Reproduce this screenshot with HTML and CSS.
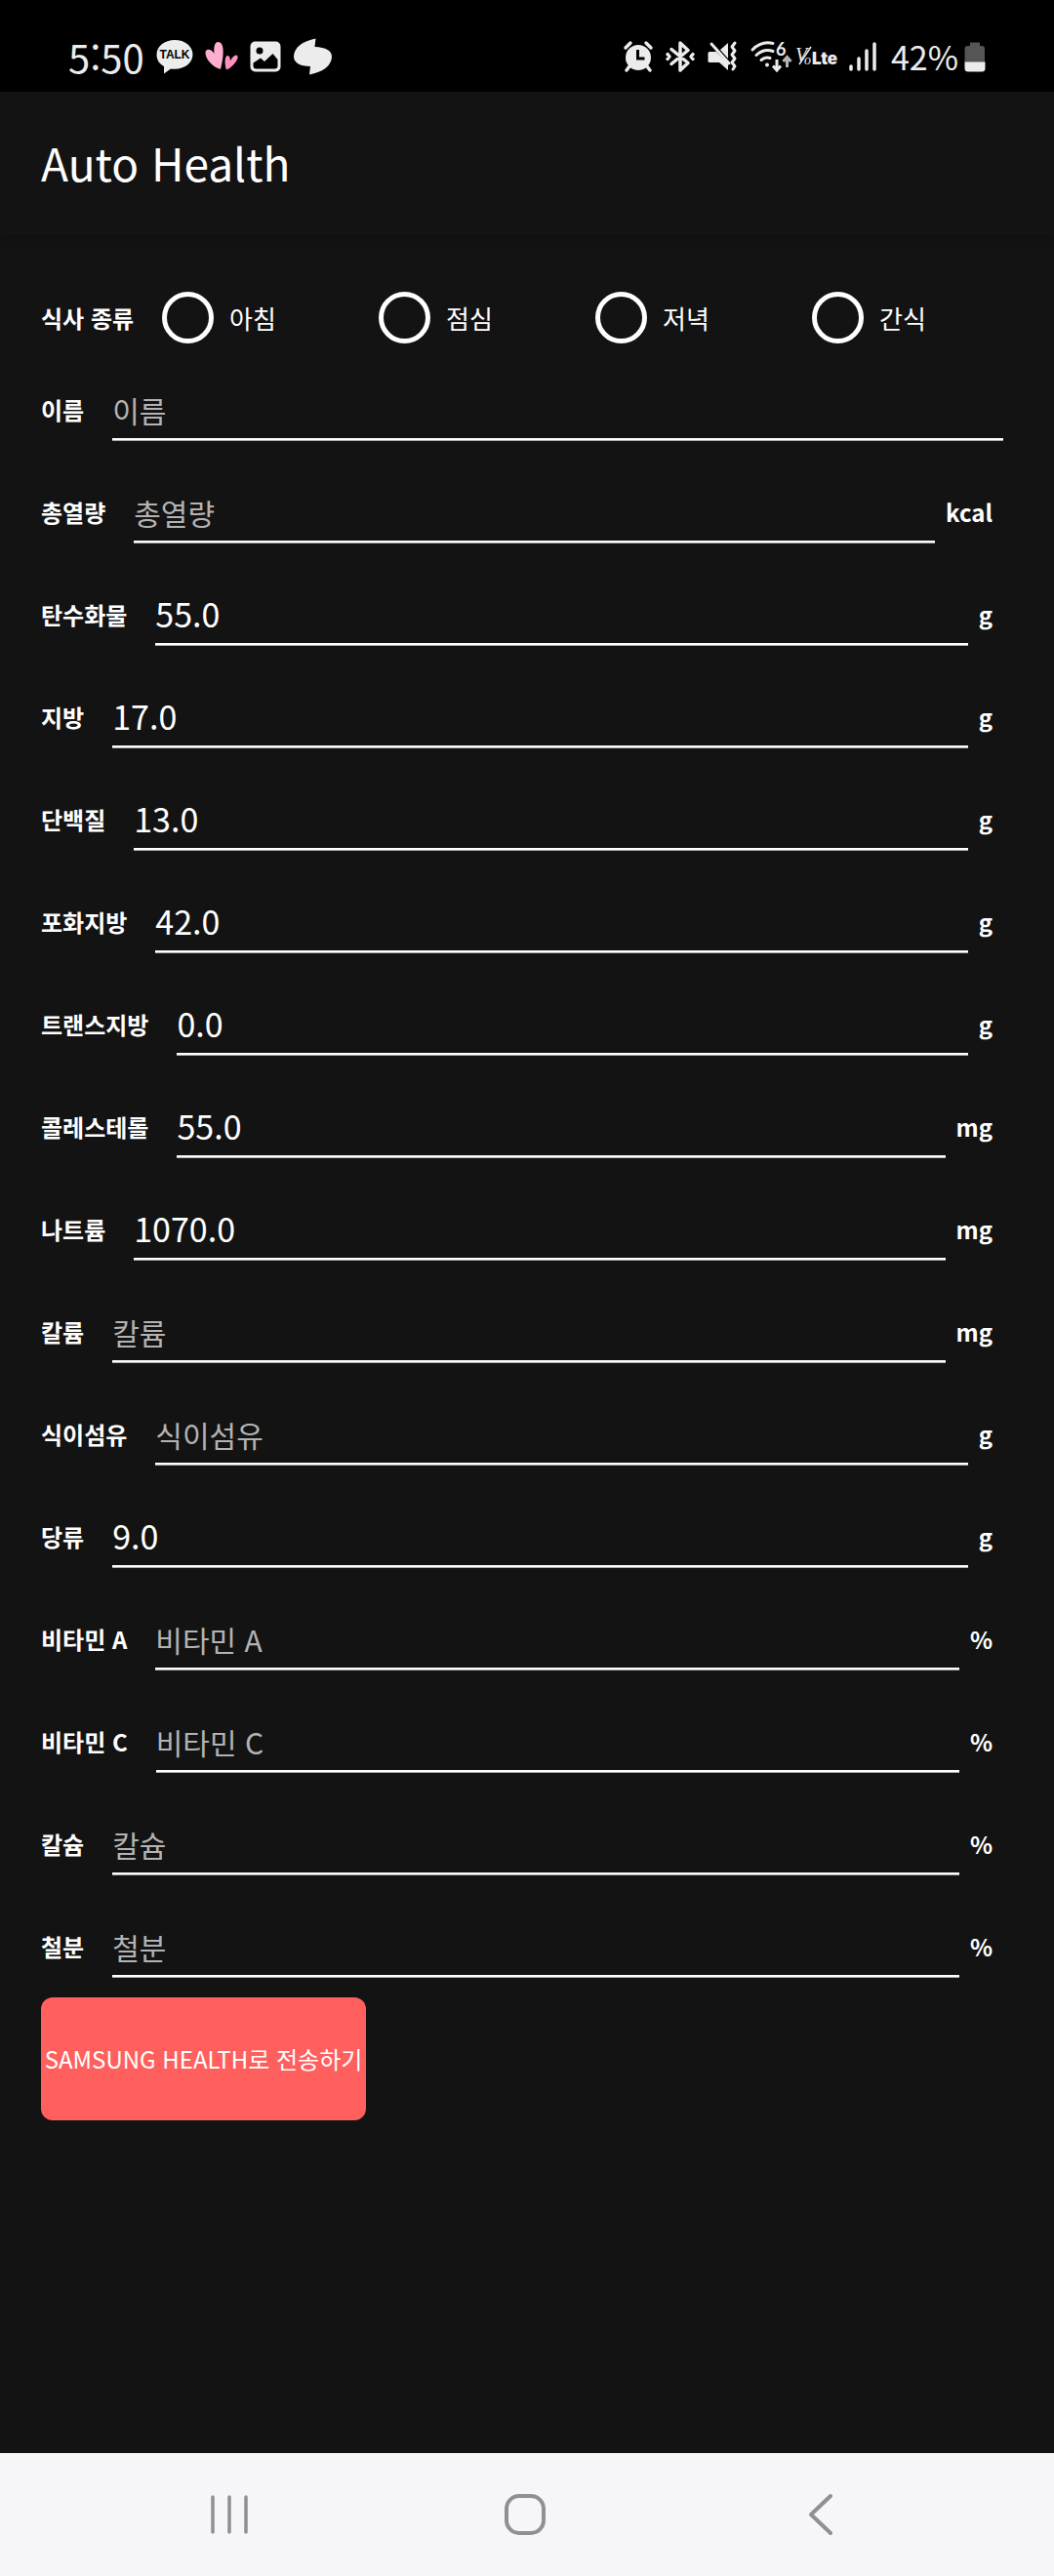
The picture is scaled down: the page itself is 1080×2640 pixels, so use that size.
FILE: index.html
```html
<!DOCTYPE html>
<html lang="ko">
<head>
<meta charset="utf-8">
<meta name="viewport" content="width=device-width, initial-scale=1">
<title>Auto Health</title>
<link rel="stylesheet" href="styles.css">
</head>
<body>
<div class="status">
  <div class="status-left">
    <span class="clock">5:50</span>
    <svg width="38" height="36" viewBox="0 0 38 36"><path d="M19 1C8.500 1 0.500 7.500 0.500 16c0 5.500 3 9.500 7.500 12v7.500l7-5c1.500.300 2.500.300 4 .300 10.500 0 18.500-6.500 18.500-15S29.500 1 19 1z" fill="#ececec"/><text class="talk" x="19" y="20" text-anchor="middle">TALK</text></svg>
    <svg width="34" height="32" viewBox="0 0 34 32"><path d="M16 29C9 27 1 20 .5 12.500 0 8 6 7 9.500 13 9 7 9.500 1 13.500 1c7 0 6 15 2.500 28z" fill="#ffaed0"/><path d="M22 29.500c-2-5-2-14 1-14.500 2-.300 3 3 3 5.500 2-4 5-7 7-5.500 3 2.500-5 12.500-11 14.500z" fill="#ff90c0"/></svg>
    <svg width="32" height="32" viewBox="0 0 32 32"><rect x="0.500" y="0.500" width="31" height="31" rx="5" fill="#ececec"/><circle cx="10" cy="10" r="3.500" fill="#000"/><path d="M3.500 22.500L11 17.500l4 3.500 8.500-8 5 6v6.500a3 3 0 0 1-3 3H6.500a3 3 0 0 1-3-3z" fill="#000"/></svg>
    <svg width="40" height="38" viewBox="0 0 40 38"><path d="M23.500 0.500C10 3 1 10 1 19c0 6 6 10 17 10l-1 8.500C31 35 40 28 40 19c0-6-6-9.500-17.500-10z" fill="#ececec"/></svg>
  </div>
  <div class="status-right">
    <svg width="30" height="32" viewBox="0 0 30 32"><circle cx="15" cy="17" r="13" fill="#ececec"/><path d="M6 26l-3 4M24 26l3 4M2 7l5-5M28 7l-5-5" stroke="#ececec" stroke-width="3.500" stroke-linecap="round"/><path d="M14.500 9v9h7" fill="none" stroke="#000" stroke-width="3"/></svg>
    <svg width="30" height="34" viewBox="0 0 30 34"><path d="M6 9.500l17 14L15 31V3l8 7.500-17 14M2 14.500l2 2.500-2 2.500M28 14.500L26 17l2 2.500" fill="none" stroke="#ececec" stroke-width="3.500" stroke-linecap="round" stroke-linejoin="round"/></svg>
    <svg width="31" height="32" viewBox="0 0 31 32"><path d="M2 11h7l12 12v7l-9-8H2a1.500 1.500 0 0 1-1.500-1.500v-8A1.500 1.500 0 0 1 2 11zM21 2v16L13 9z" fill="#ececec"/><path d="M4 3l18 20M28 2l-3 4 3 4-3 4 3 4-3 4 3 4-2 3" fill="none" stroke="#ececec" stroke-width="3" stroke-linecap="round" stroke-linejoin="round"/></svg>
    <svg class="wifi" width="42" height="34" viewBox="0 0 42 34"><path d="M2 10C8 4 15 1.500 23 3.500M6 15.500c5-4.500 11-6 17-4M11 20.500c3-2.500 6-3 9-2" fill="none" stroke="#ececec" stroke-width="3" stroke-linecap="round"/><circle cx="17" cy="25.500" r="2" fill="#ececec"/><text class="six" x="26" y="16">6</text><path d="M27 20v10M23 26.500l4 4.500 4-4.500" fill="none" stroke="#ececec" stroke-width="3"/><path d="M37.500 28V18M33.500 22l4-4.500 4 4.500" fill="none" stroke="#b5b5b5" stroke-width="3"/></svg>
    <svg width="43" height="24" viewBox="0 0 43 24"><text class="vo" x="1" y="17">V</text><path d="M17 2L5 20" stroke="#ececec" stroke-width="1.500"/><text class="vo small" x="10" y="20">o</text><text class="lte" x="18" y="20">Lte</text></svg>
    <svg width="28" height="30" viewBox="0 0 28 30"><path d="M2 25v3M10 17v11M18 9v19M26 2v26" stroke="#ececec" stroke-width="3.500" stroke-linecap="round"/></svg>
    <span class="battery">42%<svg width="22" height="31" viewBox="0 0 22 31"><path d="M6 4V.500h10V4h2a3 3 0 0 1 3 3v14H.500V7a3 3 0 0 1 3-3z" fill="#555"/><path d="M.500 20.500h21V27a3.500 3.500 0 0 1-3.500 3.500H4A3.500 3.500 0 0 1 .500 27z" fill="#ececec"/></svg></span>
  </div>
</div>
<header class="appbar"><h1>Auto Health</h1></header>
<main>
<form class="form">
  <div class="meals" role="radiogroup" aria-labelledby="meal-name">
    <span class="name" id="meal-name">식사 종류</span>
    <div class="options">
      <label class="option"><input type="radio" name="meal">아침</label>
      <label class="option"><input type="radio" name="meal">점심</label>
      <label class="option"><input type="radio" name="meal">저녁</label>
      <label class="option"><input type="radio" name="meal">간식</label>
    </div>
  </div>
  <div class="fields">
    <div class="field"><label class="name" for="f1">이름</label><input id="f1" type="text" placeholder="이름"></div>
    <div class="field"><label class="name" for="f2">총열량</label><input id="f2" type="text" placeholder="총열량"><span class="unit">kcal</span></div>
    <div class="field"><label class="name" for="f3">탄수화물</label><input id="f3" type="text" value="55.0"><span class="unit">g</span></div>
    <div class="field"><label class="name" for="f4">지방</label><input id="f4" type="text" value="17.0"><span class="unit">g</span></div>
    <div class="field"><label class="name" for="f5">단백질</label><input id="f5" type="text" value="13.0"><span class="unit">g</span></div>
    <div class="field"><label class="name" for="f6">포화지방</label><input id="f6" type="text" value="42.0"><span class="unit">g</span></div>
    <div class="field"><label class="name" for="f7">트랜스지방</label><input id="f7" type="text" value="0.0"><span class="unit">g</span></div>
    <div class="field"><label class="name" for="f8">콜레스테롤</label><input id="f8" type="text" value="55.0"><span class="unit">mg</span></div>
    <div class="field"><label class="name" for="f9">나트륨</label><input id="f9" type="text" value="1070.0"><span class="unit">mg</span></div>
    <div class="field"><label class="name" for="f10">칼륨</label><input id="f10" type="text" placeholder="칼륨"><span class="unit">mg</span></div>
    <div class="field"><label class="name" for="f11">식이섬유</label><input id="f11" type="text" placeholder="식이섬유"><span class="unit">g</span></div>
    <div class="field"><label class="name" for="f12">당류</label><input id="f12" type="text" value="9.0"><span class="unit">g</span></div>
    <div class="field"><label class="name" for="f13">비타민 A</label><input id="f13" type="text" placeholder="비타민 A"><span class="unit">%</span></div>
    <div class="field"><label class="name" for="f14">비타민 C</label><input id="f14" type="text" placeholder="비타민 C"><span class="unit">%</span></div>
    <div class="field"><label class="name" for="f15">칼슘</label><input id="f15" type="text" placeholder="칼슘"><span class="unit">%</span></div>
    <div class="field"><label class="name" for="f16">철분</label><input id="f16" type="text" placeholder="철분"><span class="unit">%</span></div>
  </div>
  <button class="send" type="button">SAMSUNG HEALTH로 전송하기</button>
</form>
</main>
<nav class="navbar">
  <button type="button" aria-label="최근 앱"><svg width="42" height="44" viewBox="0 0 42 44"><path d="M4 4v36M21 4v36M38 4v36" stroke="#909092" stroke-width="3.500" stroke-linecap="round"/></svg></button>
  <button type="button" aria-label="홈"><svg width="44" height="44" viewBox="0 0 44 44"><rect x="3" y="3" width="38" height="38" rx="13" fill="none" stroke="#909092" stroke-width="4"/></svg></button>
  <button type="button" aria-label="뒤로"><svg width="44" height="44" viewBox="0 0 44 44"><path d="M32 3L12 22l20 19" fill="none" stroke="#909092" stroke-width="4" stroke-linecap="round" stroke-linejoin="round"/></svg></button>
</nav>
</body>
</html>
```
FILE: styles.css
```css
* { box-sizing: border-box; }
body {
  margin: 0;
  min-height: 100vh;
  display: flex;
  flex-direction: column;
  background: #131313;
  color: #fff;
  font-family: "Noto Sans CJK KR", sans-serif;
}
svg { display: block; flex: none; overflow: visible; }

.status {
  height: 94px;
  padding: 22px 70px 0 70px;
  display: flex;
  justify-content: space-between;
  background: #000;
  color: #ececec;
  font-size: 40px;
  line-height: 70px;
}
.status-left, .status-right { display: flex; align-items: center; height: 72px; }
.status-left { gap: 12px; }
.status-right { gap: 13px; }
.wifi { margin-right: -10px; }
.battery { display: flex; align-items: center; gap: 6px; font-size: 34px; margin-left: 2px; }
.talk { font: bold 12px "Liberation Sans", sans-serif; fill: #000; }
.six { font: bold 18px Lato, sans-serif; fill: #ececec; }
.vo { font: italic 20px "Liberation Serif", serif; fill: #ececec; }
.vo.small { font-size: 14px; }
.lte { font: 900 17px Inter, sans-serif; fill: #ececec; }

.appbar {
  height: 147px;
  padding: 0 42px 4px;
  display: flex;
  align-items: center;
  box-shadow: 0 4px 6px rgba(0, 0, 0, 0.12);
}
h1 { margin: 0; font-size: 46px; font-weight: 400; line-height: 60px; }

main { flex: 1; }
.form { padding: 58px 26px 40px 42px; }
.meals {
  margin-bottom: 41px;
  display: flex;
  align-items: center;
  gap: 29px;
}
.name { flex: none; font-size: 24px; font-weight: 700; line-height: 36px; white-space: nowrap; }
.options { flex: 1; display: grid; grid-template-columns: repeat(4, 1fr); }
.option { display: flex; align-items: center; gap: 16px; font-size: 26px; line-height: 36px; }
.option input {
  appearance: none;
  width: 53px;
  height: 53px;
  margin: 0;
  border: 5px solid #fff;
  border-radius: 50%;
}
.option input:checked { background: radial-gradient(circle, #fff 45%, transparent 50%); }

.fields { display: flex; flex-direction: column; gap: 46px; }
.field { display: flex; align-items: center; padding-right: 26px; }
.field .name { margin-right: 29px; padding-bottom: 6px; }
.field input {
  flex: 1;
  min-width: 0;
  height: 58px;
  margin-bottom: 1px;
  padding: 0 0 6px;
  border: 0;
  border-bottom: 2px solid #fff;
  border-radius: 0;
  box-shadow: 0 1px #aaa;
  background: none;
  color: #fff;
  font-family: inherit;
  font-size: 34px;
  outline: 0;
}
.field input::placeholder { color: #b3b3b3; opacity: 1; font-size: 30px; }
.unit { margin: 0 11px; padding-bottom: 6px; font-size: 24px; font-weight: 700; line-height: 36px; }

.send {
  width: 333px;
  height: 126px;
  margin-top: 20px;
  padding: 0 0 2px;
  border: 0;
  border-radius: 12px;
  background: #ff5f5d;
  color: #fff;
  font-family: inherit;
  font-size: 24px;
  white-space: nowrap;
}

.navbar {
  height: 126px;
  padding: 0 87px 0 83px;
  display: grid;
  grid-template-columns: repeat(3, 1fr);
  background: #f6f6f8;
}
.navbar button { display: flex; align-items: center; justify-content: center; padding: 0; border: 0; background: none; }
```
